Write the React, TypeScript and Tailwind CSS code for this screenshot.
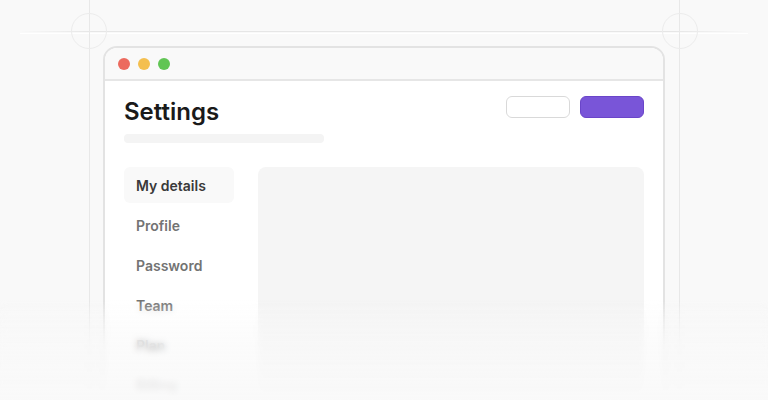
import React from "react";

const items = ["My details", "Profile", "Password", "Team", "Plan", "Billing"];

export default function App() {
  return (
    <div
      className="relative w-[768px] h-[400px] overflow-hidden bg-[#f9f9f9]"
      style={{ fontFamily: "Inter, 'Noto Sans', sans-serif" }}
    >
      {/* decorative guides */}
      <div className="absolute left-[20px] right-[20px] top-[31px] h-px bg-[linear-gradient(to_right,rgba(230,230,230,0),#e6e6e6_10%,#e6e6e6_90%,rgba(230,230,230,0))]" />
      <div className="absolute left-[20px] right-[20px] top-[33px] h-px bg-white" />
      <div className="absolute left-[89px] top-0 bottom-0 w-px bg-[#e8e8e8]" />
      <div className="absolute left-[679px] top-0 bottom-0 w-px bg-[#e8e8e8]" />
      <div className="absolute left-[71px] top-[13px] w-[36px] h-[36px] rounded-full border border-[#ececec]" />
      <div className="absolute left-[662px] top-[13px] w-[36px] h-[36px] rounded-full border border-[#ececec]" />

      <div className="relative px-[103px] pt-[46px]">
        <div className="h-[400px] rounded-t-[14px] border-2 border-[#e3e3e3] bg-white overflow-hidden">
          <div className="h-[33px] bg-[#f9f9f9] border-b-2 border-[#e6e6e6] flex items-center gap-2 pl-[13px]">
            <span className="w-3 h-3 rounded-full bg-[#ec6a5e]" />
            <span className="w-3 h-3 rounded-full bg-[#f4bf4f]" />
            <span className="w-3 h-3 rounded-full bg-[#61c554]" />
          </div>
          <div className="px-[19px] pt-[15px]">
            <div className="flex justify-between items-start">
              <div>
                <h1 className="mt-[1px] text-[24px] leading-[30px] font-semibold text-[#1a1a1a]">
                  Settings
                </h1>
                <div className="mt-[7px] w-[200px] h-[9px] rounded-[4px] bg-[#f4f4f4]" />
              </div>
              <div className="flex gap-[10px]">
                <div className="w-[64px] h-[22px] rounded-[6px] border border-[#d9d9d9] bg-white" />
                <div className="w-[64px] h-[22px] rounded-[6px] border border-[#6a45c9] bg-[#7955d8]" />
              </div>
            </div>
            <div className="mt-[24px] flex gap-[24px]">
              <div className="w-[110px] flex flex-col">
                {items.map((t, i) => (
                  <div
                    key={t}
                    className={
                      i === 0
                        ? "h-[36px] mb-[4px] flex items-center px-3 rounded-[6px] bg-[#f9f9f9] text-[14px] font-semibold text-[#3a3a3a]"
                        : "h-[36px] mb-[4px] flex items-center px-3 rounded-[6px] text-[14px] font-semibold text-[#737373]"
                    }
                  >
                    {t}
                  </div>
                ))}
              </div>
              <div className="flex-1 h-[300px] rounded-[8px] bg-[#f5f5f5]" />
            </div>
          </div>
        </div>
      </div>

      {/* bottom fade */}
      <div className="absolute left-0 right-0 bottom-0 h-[100px] backdrop-blur-[3px] [mask-image:linear-gradient(to_bottom,transparent,black_50%)]" />
      <div className="absolute left-0 right-0 bottom-0 h-[100px] bg-[linear-gradient(to_bottom,rgba(249,249,249,0),rgba(249,249,249,0.6)_45%,rgba(249,249,249,0.97))]" />
    </div>
  );
}
